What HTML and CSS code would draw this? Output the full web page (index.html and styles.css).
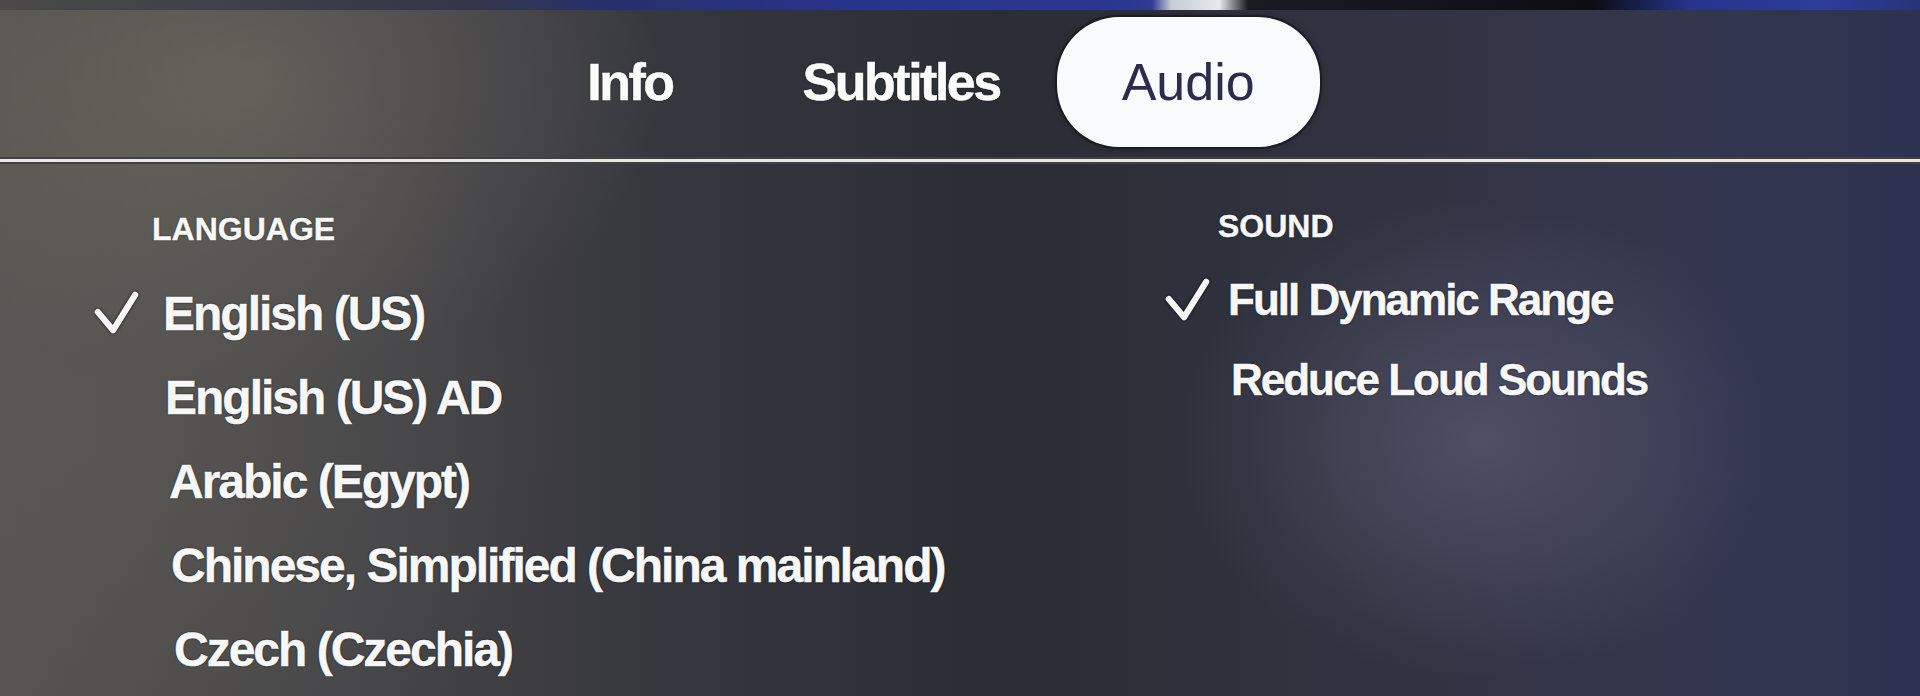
FILE: index.html
```html
<!DOCTYPE html>
<html lang="en">
<head>
<meta charset="utf-8">
<title>Audio</title>
<link rel="stylesheet" href="styles.css">
</head>
<body>
<div class="screen">
  <div class="edge"></div>
  <header class="tabbar">
    <div class="tab">Info</div>
    <div class="tab">Subtitles</div>
    <div class="tab tab-active">Audio</div>
  </header>
  <div class="divider"></div>
  <main class="panels">
    <section class="panel panel-language">
      <h2 class="heading">LANGUAGE</h2>
      <ul class="options">
        <li class="option selected"><span class="check"><svg viewBox="0 0 48 46" width="46" height="44"><path d="M5 22 L21 41 L44 4" fill="none" stroke="#f6f6f6" stroke-width="6.5" stroke-linecap="round" stroke-linejoin="round"/></svg></span><span class="label">English (US)</span></li>
        <li class="option"><span class="check"></span><span class="label">English (US) AD</span></li>
        <li class="option"><span class="check"></span><span class="label">Arabic (Egypt)</span></li>
        <li class="option"><span class="check"></span><span class="label">Chinese, Simplified (China mainland)</span></li>
        <li class="option"><span class="check"></span><span class="label">Czech (Czechia)</span></li>
      </ul>
    </section>
    <section class="panel panel-sound">
      <h2 class="heading">SOUND</h2>
      <ul class="options">
        <li class="option selected"><span class="check"><svg viewBox="0 0 48 46" width="46" height="44"><path d="M5 22 L21 41 L44 4" fill="none" stroke="#f6f6f6" stroke-width="6.5" stroke-linecap="round" stroke-linejoin="round"/></svg></span><span class="label">Full Dynamic Range</span></li>
        <li class="option"><span class="check"></span><span class="label">Reduce Loud Sounds</span></li>
      </ul>
    </section>
  </main>
</div>
</body>
</html>
```

FILE: styles.css
```css
* { box-sizing: border-box; }

html, body {
  margin: 0;
  padding: 0;
  width: 1920px;
  height: 696px;
  overflow: hidden;
}

body {
  font-family: "Liberation Sans", Arial, sans-serif;
  color: #f7f7f7;
  background: #2f3139;
}

.screen {
  width: 1920px;
  height: 696px;
  display: flex;
  flex-direction: column;
  background:
    radial-gradient(ellipse 300px 240px at 1480px 440px, rgba(118, 116, 146, 0.42), rgba(118, 116, 146, 0) 100%),
    radial-gradient(ellipse 420px 300px at 240px 80px, rgba(125, 120, 105, 0.5), rgba(125, 120, 105, 0) 100%),
    radial-gradient(ellipse 500px 420px at 60px 420px, rgba(92, 91, 86, 0.7), rgba(92, 91, 86, 0) 100%),
    linear-gradient(90deg, #53524e 0%, #464548 18%, #35363d 36%, #2b2d35 52%, #30323f 70%, #34374c 86%, #2d3250 100%);
}

.edge {
  height: 10px;
  flex: none;
  background: linear-gradient(90deg,
    #4a4a48 0%, #33354a 25%, #26306e 32%, #28348c 45%, #2a3690 58%, #303a90 60%,
    #c8ccd6 61%, #e6eaee 63.5%, #1a1a22 65%, #0d0d14 83%, #26348c 88%, #2d3c98 95%, #283478 100%);
}

.tabbar {
  flex: none;
  display: flex;
  justify-content: center;
  align-items: center;
  padding: 7px 78px 0 0;
}

.tab {
  height: 130px;
  line-height: 130px;
  padding: 0 65px;
  font-size: 52px;
  font-weight: 700;
  letter-spacing: -2.5px;
  color: #fbfbfb;
  -webkit-text-stroke: 0.5px #fbfbfb;
  text-shadow: 0 0 2px rgba(0, 0, 0, 0.8);
}

.tab-active {
  margin-left: -8px;
  background: #f8fbfb;
  color: #2c2d4e;
  -webkit-text-stroke: 0;
  font-weight: 400;
  letter-spacing: 0;
  border-radius: 62px;
  text-shadow: none;
  box-shadow: 0 0 0 2px rgba(20, 20, 30, 0.55), 0 0 6px rgba(0, 0, 0, 0.5);
}

.divider {
  flex: none;
  margin-top: 10px;
  height: 7px;
  border-top: 2px solid rgba(10, 10, 14, 0.75);
  border-bottom: 2px solid rgba(10, 10, 14, 0.75);
  background: #e6e6e2;
}

.panels {
  flex: 1;
  display: grid;
  grid-template-columns: 1071px 1fr;
  padding: 45px 0 0 93px;
}

.heading {
  margin: 0;
  font-size: 32px;
  line-height: 40px;
  font-weight: 700;
  letter-spacing: 0;
  -webkit-text-stroke: 0.4px #f7f7f7;
  text-shadow: 0 0 2px rgba(0, 0, 0, 0.8);
}

.options {
  list-style: none;
  margin: 0;
  padding: 0;
}

.option {
  display: flex;
  align-items: center;
  font-weight: 700;
  letter-spacing: -2px;
  -webkit-text-stroke: 0.5px #f7f7f7;
  text-shadow: 0 0 2px rgba(0, 0, 0, 0.85), 0 0 1px rgba(0, 0, 0, 0.9);
  white-space: nowrap;
}

.check {
  flex: none;
  display: flex;
  align-items: center;
}

.check svg {
  display: block;
  filter: drop-shadow(0 0 1.5px rgba(0, 0, 0, 0.8));
}

.panel-language .heading {
  padding-left: 59px;
  margin-bottom: 22px;
}

.panel-language .option {
  height: 84px;
  font-size: 48px;
}

.panel-language .check {
  width: 70px;
}

.panel-language .option:nth-child(2) .label { padding-left: 2px; }
.panel-language .option:nth-child(3) .label { padding-left: 6px; }
.panel-language .option:nth-child(4) .label { padding-left: 8px; }
.panel-language .option:nth-child(5) .label { padding-left: 11px; }

.panel-sound {
  margin-top: -3px;
}

.panel-sound .heading {
  padding-left: 54px;
  margin-bottom: 14px;
}

.panel-sound .option {
  height: 80px;
  font-size: 44px;
}

.panel-sound .check {
  width: 64px;
}

.panel-sound .option:nth-child(2) .label { padding-left: 3px; }
```
